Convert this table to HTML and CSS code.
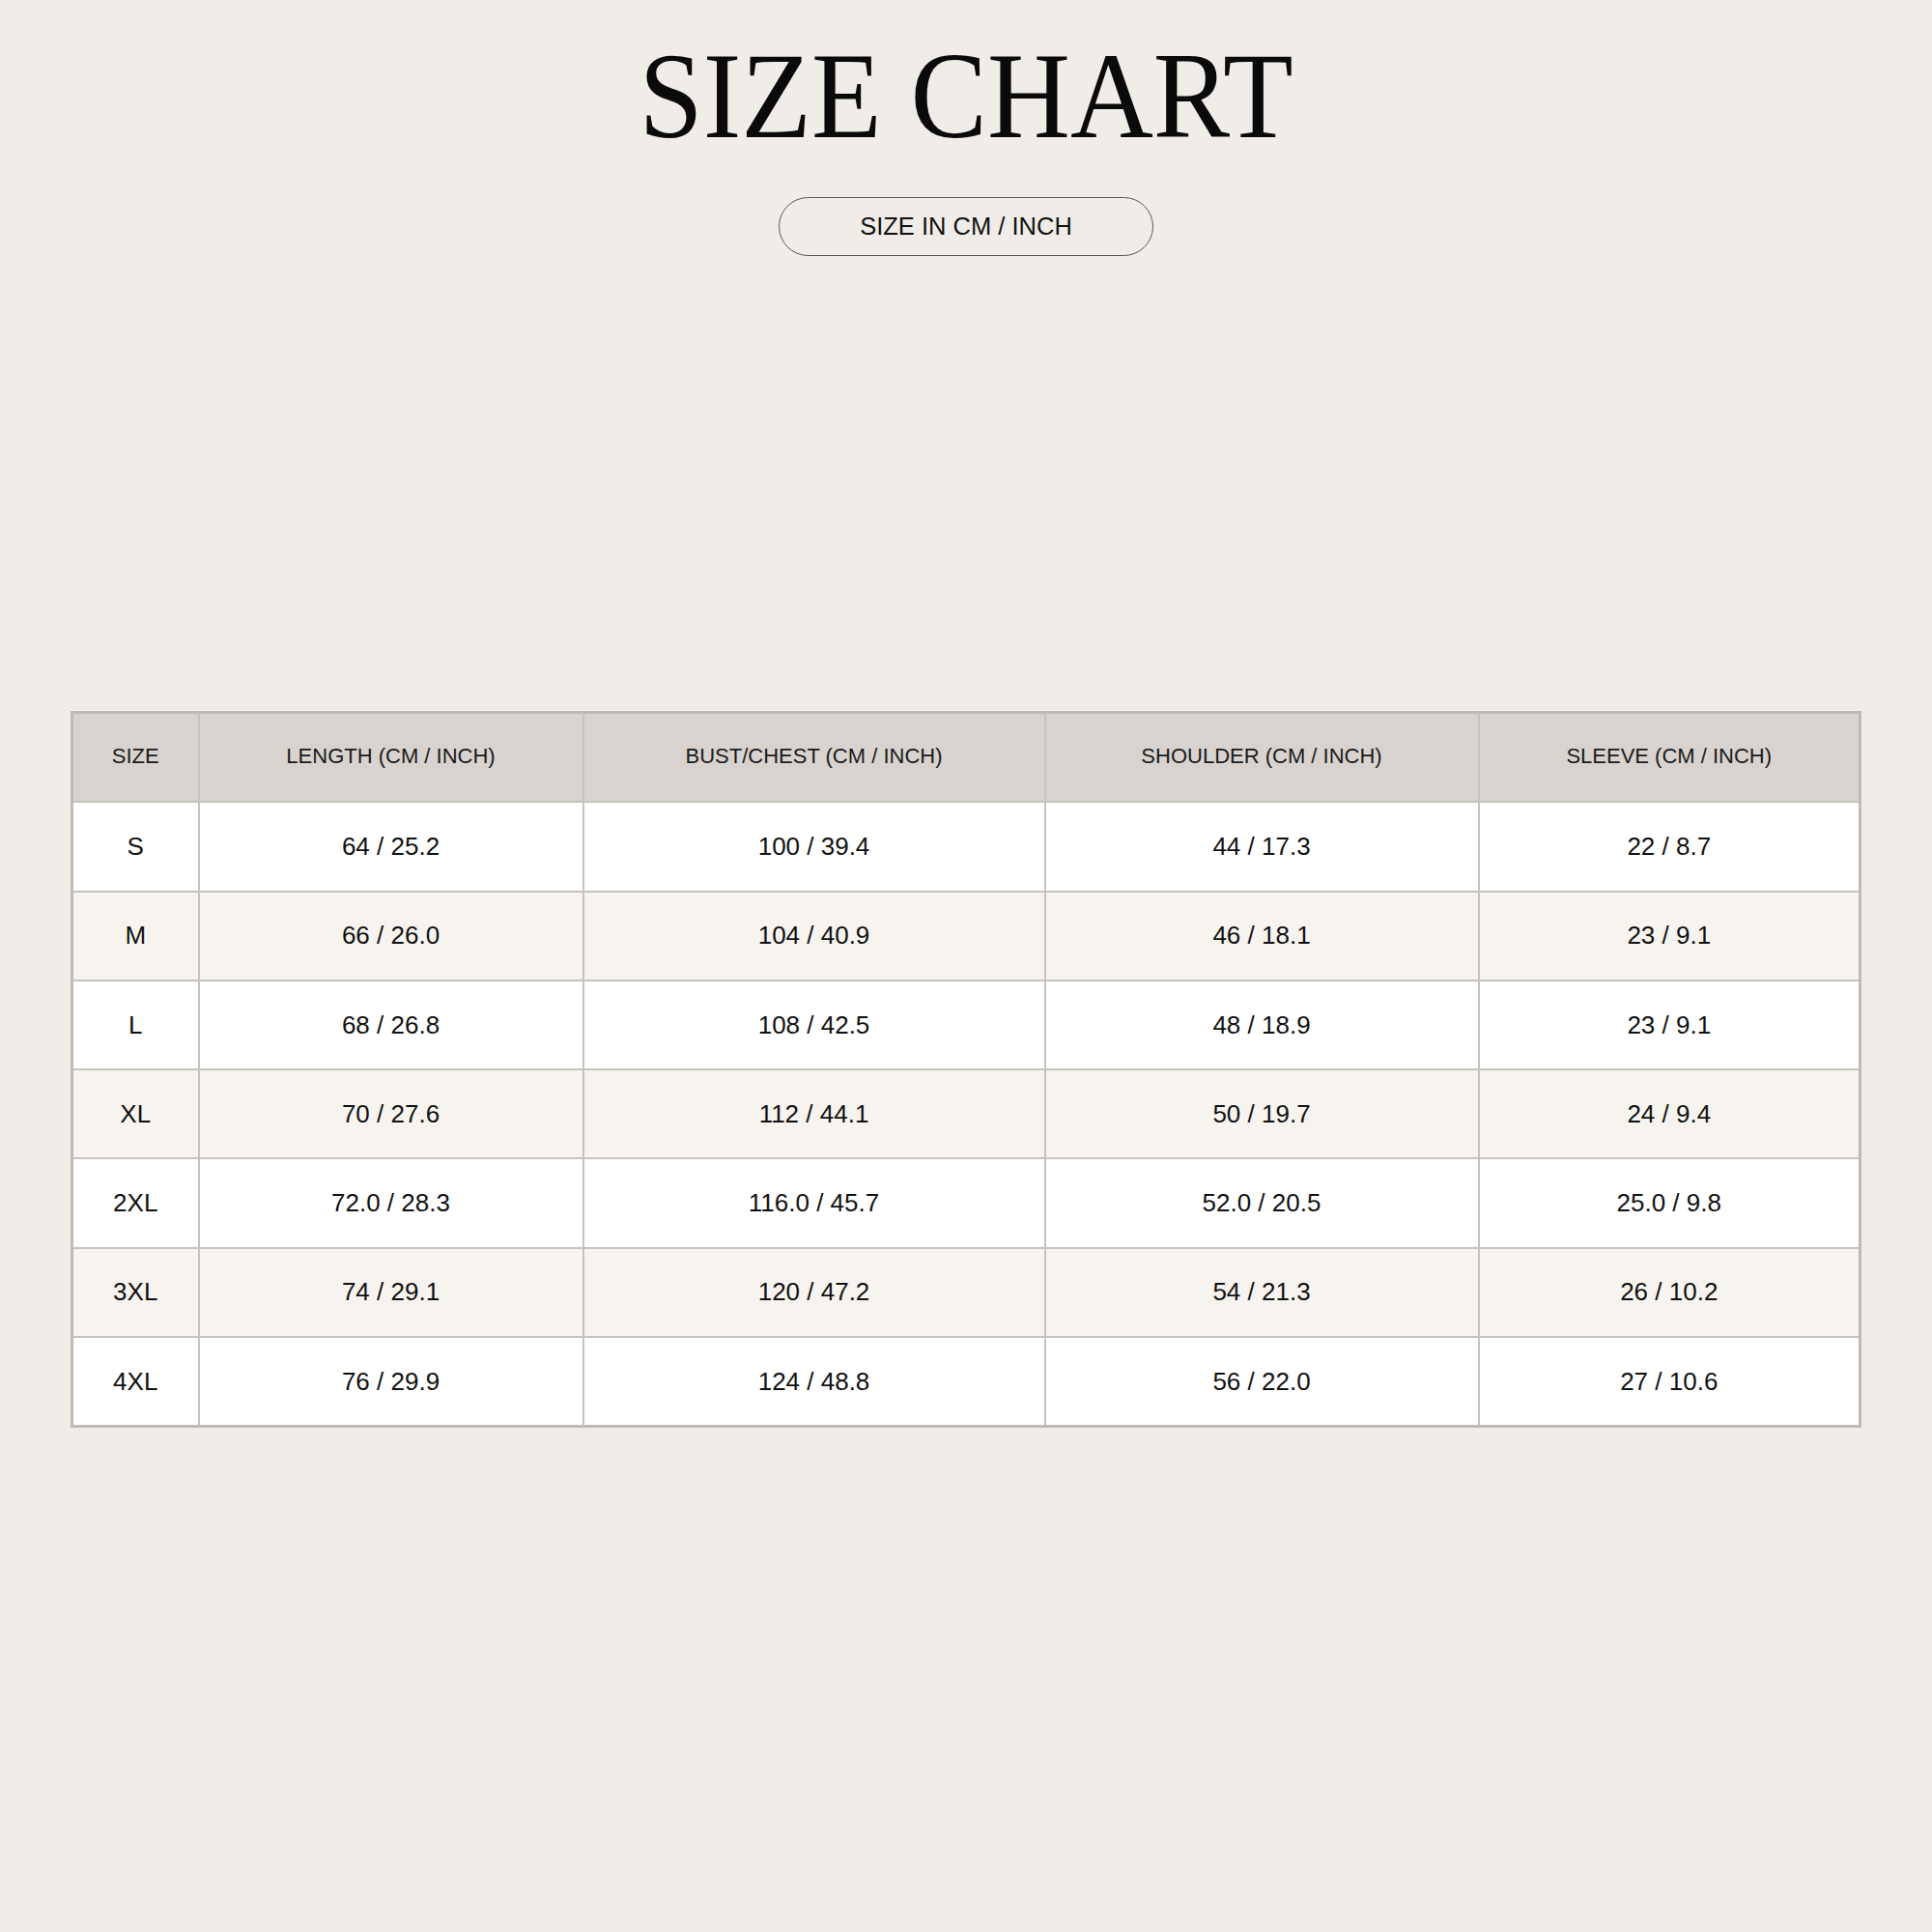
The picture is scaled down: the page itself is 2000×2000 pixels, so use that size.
FILE: index.html
```html
<!DOCTYPE html>
<html lang="en">
<head>
<meta charset="utf-8">
<title>Size Chart</title>
<link rel="stylesheet" href="styles.css">
</head>
<body>
<main class="page">
  <h1 class="title">SIZE CHART</h1>
  <div class="pill">SIZE IN CM / INCH</div>
  <table class="chart">
    <colgroup>
      <col class="c-size">
      <col class="c-length">
      <col class="c-bust">
      <col class="c-shoulder">
      <col class="c-sleeve">
    </colgroup>
    <thead>
      <tr>
        <th>SIZE</th>
        <th>LENGTH (CM / INCH)</th>
        <th>BUST/CHEST (CM / INCH)</th>
        <th>SHOULDER (CM / INCH)</th>
        <th>SLEEVE (CM / INCH)</th>
      </tr>
    </thead>
    <tbody>
      <tr><td>S</td><td>64 / 25.2</td><td>100 / 39.4</td><td>44 / 17.3</td><td>22 / 8.7</td></tr>
      <tr><td>M</td><td>66 / 26.0</td><td>104 / 40.9</td><td>46 / 18.1</td><td>23 / 9.1</td></tr>
      <tr><td>L</td><td>68 / 26.8</td><td>108 / 42.5</td><td>48 / 18.9</td><td>23 / 9.1</td></tr>
      <tr><td>XL</td><td>70 / 27.6</td><td>112 / 44.1</td><td>50 / 19.7</td><td>24 / 9.4</td></tr>
      <tr><td>2XL</td><td>72.0 / 28.3</td><td>116.0 / 45.7</td><td>52.0 / 20.5</td><td>25.0 / 9.8</td></tr>
      <tr><td>3XL</td><td>74 / 29.1</td><td>120 / 47.2</td><td>54 / 21.3</td><td>26 / 10.2</td></tr>
      <tr><td>4XL</td><td>76 / 29.9</td><td>124 / 48.8</td><td>56 / 22.0</td><td>27 / 10.6</td></tr>
    </tbody>
  </table>
</main>
</body>
</html>
```

FILE: styles.css
```css
html, body {
  margin: 0;
  padding: 0;
  background: #f0ede8;
}

.page {
  width: 2000px;
  min-height: 2000px;
  padding-top: 35px;
  box-sizing: border-box;
  display: flex;
  flex-direction: column;
  align-items: center;
  font-family: "Liberation Sans", Arial, sans-serif;
  color: #111;
}

.title {
  margin: 0;
  font-family: "Liberation Serif", "Times New Roman", serif;
  font-weight: normal;
  font-size: 128px;
  line-height: 128px;
  height: 128px;
  color: #0a0a0a;
  transform: scaleX(0.93);
  white-space: nowrap;
}

.pill {
  margin-top: 41px;
  width: 388px;
  height: 61px;
  box-sizing: border-box;
  border: 1.5px solid #5a5755;
  border-radius: 31px;
  display: flex;
  align-items: center;
  justify-content: center;
  font-size: 25.5px;
  color: #111;
}

.chart {
  margin-top: 471px;
  width: 1851px;
  table-layout: fixed;
  border-collapse: collapse;
  border: 3px solid #bebab5;
}

.c-size { width: 131px; }
.c-length { width: 398px; }
.c-bust { width: 478px; }
.c-shoulder { width: 449px; }
.c-sleeve { width: 395px; }

.chart th,
.chart td {
  border: 2px solid #c6c2bd;
  text-align: center;
  vertical-align: middle;
  padding: 0;
  height: 90.3px;
}

.chart th {
  background: #d8d3ce;
  font-weight: normal;
  font-size: 22px;
  color: #1a1a1a;
  height: 87.3px;
  padding-bottom: 3px;
}

.chart td {
  background: #ffffff;
  font-size: 26px;
  color: #111;
}

.chart tbody tr:nth-child(even) td {
  background: #f7f4ef;
}
```
